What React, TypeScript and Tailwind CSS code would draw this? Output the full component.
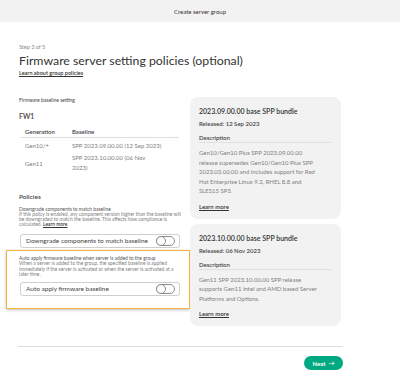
import React from 'react';

const Toggle: React.FC = () => (
  <span className="flex h-[10px] w-[19px] items-center rounded-full border border-[#8c8c8c] bg-white">
    <span className="ml-[-1px] h-[10px] w-[10px] rounded-full border border-[#8c8c8c] bg-white" />
  </span>
);

const ToggleRow: React.FC<{ label: string }> = ({ label }) => (
  <div className="flex h-[14px] items-center justify-between rounded-[3px] border border-[#cfcfcf] bg-white pl-[5px] pr-[4px]">
    <span className="text-[6.5px] leading-[8px] text-[#444]">{label}</span>
    <Toggle />
  </div>
);

interface Bundle {
  title: string;
  released: string;
  lines: string[];
}

const bundles: Bundle[] = [
  {
    title: '2023.09.00.00 base SPP bundle',
    released: 'Released: 12 Sep 2023',
    lines: [
      'Gen10/Gen10 Plus SPP 2023.09.00.00',
      'release supersedes Gen10/Gen10 Plus SPP',
      '2023.03.00.00 and includes support for Red',
      'Hat Enterprise Linux 9.2, RHEL 8.8 and',
      'SLES15 SP5.',
    ],
  },
  {
    title: '2023.10.00.00 base SPP bundle',
    released: 'Released: 06 Nov 2023',
    lines: [
      'Gen11 SPP 2023.10.00.00 SPP release',
      'supports Gen11 Intel and AMD based Server',
      'Platforms and Options.',
    ],
  },
];

const BundleCard: React.FC<{ bundle: Bundle }> = ({ bundle }) => (
  <div className="rounded-[8px] bg-[#f2f2f2] px-[9px] pb-[9px] pt-[10px]">
    <div className="text-[7px] font-semibold leading-[8px] text-[#333]">{bundle.title}</div>
    <div className="mt-[5px] text-[6px] font-semibold leading-[7px] text-[#444]">{bundle.released}</div>
    <div className="mt-[7px] border-b border-[#e0e0e0] pb-[1px] text-[6px] font-semibold leading-[7px] text-[#444]">
      Description
    </div>
    <div className="mt-[5px] text-[6px] leading-[9.5px] text-[#808080]">
      {bundle.lines.map((l) => (
        <div key={l}>{l}</div>
      ))}
    </div>
    <div className="mt-[7px] text-[6px] font-semibold leading-[7px] text-[#333] underline">Learn more</div>
  </div>
);

export default function App() {
  return (
    <div
      className="h-[376px] w-[400px] overflow-hidden bg-white"
      style={{ fontFamily: 'Lato, "Noto Sans", sans-serif' }}
    >
      <header className="flex h-[22px] items-center justify-center bg-[#f2f2f2] text-[6px] text-[#333]">
        Create server group
      </header>

      <div className="ml-[18px] w-[325px]">
        <div className="mt-[22px] pl-[1px] text-[5.5px] leading-[6px] text-[#8a8a8a]">Step 3 of 5</div>
        <h1 className="mt-[4px] pl-[1px] text-[12.3px] leading-[14px] text-[#333]">
          Firmware server setting policies (optional)
        </h1>
        <div className="mt-[2px] pl-[1px] text-[5.5px] font-semibold leading-[6px] text-[#333] underline">
          Learn about group policies
        </div>

        <div className="mt-[21px] flex gap-[10px]">
          <div className="w-[162px]">
            <div className="pl-[1px] text-[5px] leading-[6px] text-[#444]">Firmware baseline setting</div>
            <div className="mt-[9px] pl-[1px] text-[7px] font-semibold leading-[9px] text-[#444]">FW1</div>

            <div className="ml-[2px] mt-[4px] w-[159px] text-[6px]">
              <div className="flex h-[13px] items-center border-b border-[#e0e0e0] font-semibold text-[#444]">
                <span className="w-[52px] pl-[5px]">Generation</span>
                <span>Baseline</span>
              </div>
              <div className="flex h-[14px] items-center text-[#808080]">
                <span className="w-[52px] pl-[5px]">Gen10/+</span>
                <span>SPP 2023.09.00.00 (12 Sep 2023)</span>
              </div>
              <div className="flex h-[22px] items-center text-[#808080]">
                <span className="w-[52px] pl-[5px]">Gen11</span>
                <span className="leading-[10px]">
                  SPP 2023.10.00.00 (06 Nov
                  <br />
                  2023)
                </span>
              </div>
            </div>

            <div className="mt-[19px] pl-[1px] text-[6.5px] font-semibold leading-[8px] text-[#444]">Policies</div>
            <div className="mt-[6px] whitespace-nowrap pl-[1px] text-[4.9px] leading-[5px] text-[#555]">
              <div>Downgrade components to match baseline</div>
              <div className="text-[#808080]">
                If this policy is enabled, any component version higher than the baseline will
                <br />
                be downgraded to match the baseline. This affects how compliance is
                <br />
                calculated. <span className="font-semibold text-[#333] underline">Learn more</span>
              </div>
            </div>
            <div className="ml-[2px] mt-[7px]">
              <ToggleRow label="Downgrade components to match baseline" />
            </div>

            <div className="-ml-[12px] -mr-[10px] mt-[2px] border-[1.5px] border-[#f5b23e] pb-[12px] pl-[12px] pr-[9px] pt-[5px] shadow-[0_1px_3px_rgba(0,0,0,0.25)]">
              <div className="whitespace-nowrap text-[4.9px] leading-[5.3px] text-[#555]">
                <div>Auto apply firmware baseline when server is added to the group</div>
                <div className="text-[#808080]">
                  When a server is added to the group, the specified baseline is applied
                  <br />
                  immediately if the server is activated or when the server is activated at a
                  <br />
                  later time.
                </div>
              </div>
              <div className="ml-[1px] mt-[5px]">
                <ToggleRow label="Auto apply firmware baseline" />
              </div>
            </div>
          </div>

          <div className="flex w-[151px] flex-col gap-[5px]">
            {bundles.map((b) => (
              <BundleCard key={b.title} bundle={b} />
            ))}
          </div>
        </div>

        <div className="mt-[20px] border-t border-[#dcdcdc]" />
        <div className="mt-[9px] flex justify-end">
          <button className="flex h-[14px] w-[39px] items-center justify-center gap-[3px] rounded-full bg-[#01a982] text-[6px] font-bold text-white">
            Next
            <span className="text-[6px] leading-[6px]">→</span>
          </button>
        </div>
      </div>
    </div>
  );
}
